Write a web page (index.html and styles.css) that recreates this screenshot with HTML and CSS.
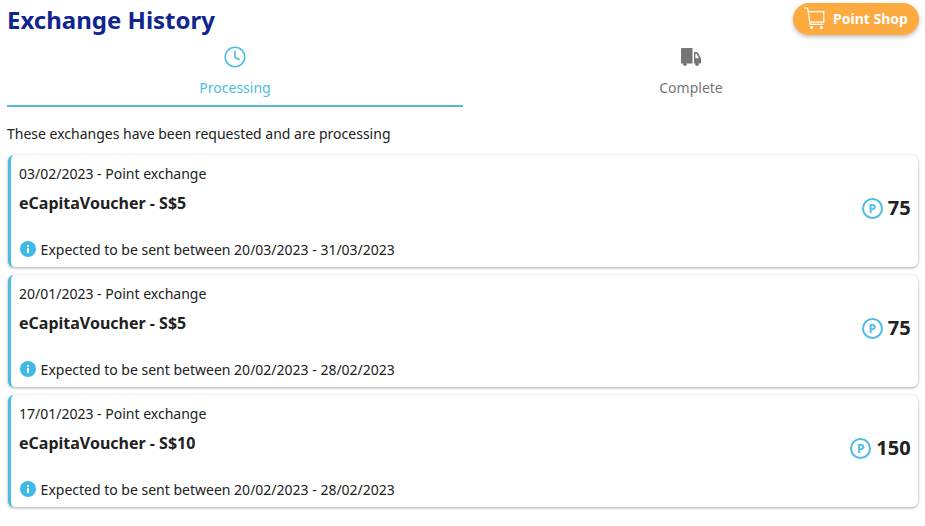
FILE: index.html
```html
<!DOCTYPE html>
<html>
  <head>
    <meta charset="utf-8" />
    <title>Exchange History</title>
    <link rel="stylesheet" href="styles.css">
  </head>
  <body>
    <div class="page">
      <div class="header">
        <h1 class="title">Exchange History</h1>
        <button class="shop-btn">
          <svg class="shop-icon" width="22" height="24" viewBox="0 0 22 24" fill="none" stroke="#fff" stroke-width="1.2">
            <path d="M1 2h3.6l2.6 16.4h13"/>
            <path d="M5 5.6h15.8v10.6H6.8"/>
            <circle cx="8.6" cy="21.4" r="1.5" fill="#fff" stroke="none"/>
            <circle cx="18.4" cy="21.4" r="1.5" fill="#fff" stroke="none"/>
          </svg>
          <span>Point Shop</span>
        </button>
      </div>

      <div class="tabs">
        <div class="tab active">
          <svg width="24" height="24" viewBox="0 0 24 24" fill="none" stroke="#4dbde4" stroke-width="1.6">
            <circle cx="12" cy="12" r="9.8"/>
            <path d="M12 5.8v6.6l4.6 2.4"/>
          </svg>
          <span>Processing</span>
        </div>
        <div class="tab">
          <svg width="24" height="24" viewBox="0 0 24 24" fill="#757575">
            <path d="M2 4.2C2 3.5 2.5 3 3.2 3h10.3v15.6H2z"/>
            <path d="M15 7h2.6c.5 0 .9.2 1.1.6l3.3 5.6v4.2c0 .7-.5 1.2-1.2 1.2H15zm1.4 1.8v4.4h3.6l-2.5-4.4z"/>
            <circle cx="6" cy="19.2" r="1.8"/>
            <circle cx="18" cy="19.2" r="1.8"/>
          </svg>
          <span>Complete</span>
        </div>
      </div>

      <p class="note">These exchanges have been requested and are processing</p>

      <div class="card">
        <div class="card-main">
          <div class="card-date">03/02/2023 - Point exchange</div>
          <div class="card-name">eCapitaVoucher - S$5</div>
          <div class="card-info">
            <svg width="16" height="16" viewBox="0 0 16 16"><circle cx="8" cy="8" r="8" fill="#3fb9e6"/><rect x="7" y="7" width="2" height="5" fill="#fff"/><rect x="7" y="4" width="2" height="2" fill="#fff"/></svg>
            <span>Expected to be sent between 20/03/2023 - 31/03/2023</span>
          </div>
        </div>
        <div class="points">
          <span class="p-icon">P</span>
          <span class="p-num">75</span>
        </div>
      </div>

      <div class="card">
        <div class="card-main">
          <div class="card-date">20/01/2023 - Point exchange</div>
          <div class="card-name">eCapitaVoucher - S$5</div>
          <div class="card-info">
            <svg width="16" height="16" viewBox="0 0 16 16"><circle cx="8" cy="8" r="8" fill="#3fb9e6"/><rect x="7" y="7" width="2" height="5" fill="#fff"/><rect x="7" y="4" width="2" height="2" fill="#fff"/></svg>
            <span>Expected to be sent between 20/02/2023 - 28/02/2023</span>
          </div>
        </div>
        <div class="points">
          <span class="p-icon">P</span>
          <span class="p-num">75</span>
        </div>
      </div>

      <div class="card">
        <div class="card-main">
          <div class="card-date">17/01/2023 - Point exchange</div>
          <div class="card-name">eCapitaVoucher - S$10</div>
          <div class="card-info">
            <svg width="16" height="16" viewBox="0 0 16 16"><circle cx="8" cy="8" r="8" fill="#3fb9e6"/><rect x="7" y="7" width="2" height="5" fill="#fff"/><rect x="7" y="4" width="2" height="2" fill="#fff"/></svg>
            <span>Expected to be sent between 20/02/2023 - 28/02/2023</span>
          </div>
        </div>
        <div class="points">
          <span class="p-icon">P</span>
          <span class="p-num">150</span>
        </div>
      </div>
    </div>
  </body>
</html>
```

FILE: styles.css
```css
/* base */
html,body{margin:0;padding:0;background:#fff;}
body{font-family:"Noto Sans",sans-serif;color:#212121;font-size:14px;overflow:hidden;}

/* header */
.page{padding:3px 6px 0 7px;}
.header{display:flex;justify-content:space-between;align-items:flex-start;height:37px;}
.title{margin:0;font-size:24px;line-height:34px;font-weight:700;color:#10258f;}
.shop-btn{display:flex;align-items:center;gap:8px;width:126px;height:32px;padding:0 0 2px 10px;border:0;border-radius:16px;background:#fdab40;color:#fff;font-family:inherit;font-size:14px;font-weight:700;box-shadow:0 2px 4px rgba(0,0,0,.25);}

/* tabs */
.tabs{display:flex;height:67px;}
.tab{flex:1;display:flex;flex-direction:column;align-items:center;padding-top:5px;color:#757575;box-sizing:border-box;}
.tab span{margin-top:9px;line-height:20px;}
.tab.active{color:#4dbde4;border-bottom:2px solid #54b7d8;}

.note{margin:17px 0 11px;line-height:20px;}

/* card */
.card{display:flex;justify-content:space-between;align-items:flex-start;box-sizing:border-box;height:112px;margin:0 1px 8px 1px;padding:9px 7.4px 7px 8px;border-left:3px solid #4dbde4;border-radius:6px;box-shadow:0 1px 3px rgba(0,0,0,.35);background:#fff;}
.card-main{display:flex;flex-direction:column;height:100%;}
.card-date{line-height:20px;}
.card-name{margin-top:8px;font-size:16px;line-height:22px;font-weight:700;}
.card-info{display:flex;align-items:center;gap:4.6px;margin-top:auto;margin-left:1px;line-height:20px;}
.card-info svg{margin-bottom:2px;}
.points{display:flex;align-items:center;gap:5px;margin-top:31px;}
.p-icon{display:flex;align-items:center;justify-content:center;box-sizing:border-box;width:21px;height:21px;border:2px solid #4dbde4;border-radius:50%;color:#4dbde4;font-size:12px;font-weight:700;}
.p-num{font-size:20px;line-height:26px;font-weight:700;}
```
